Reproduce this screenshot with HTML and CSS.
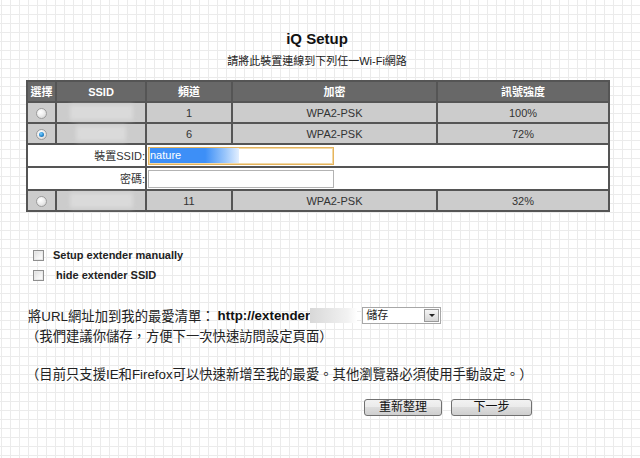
FILE: index.html
```html
<!DOCTYPE html>
<html lang="zh-Hant">
<head>
<meta charset="utf-8">
<title>iQ Setup</title>
<link rel="stylesheet" href="styles.css">
</head>
<body>
<div class="page">
  <h1 class="title">iQ Setup</h1>
  <p class="subtitle">請將此裝置連線到下列任一Wi-Fi網路</p>

  <table class="ap-table">
    <colgroup>
      <col class="c-sel"><col class="c-ssid"><col class="c-ch"><col class="c-enc"><col class="c-sig">
    </colgroup>
    <thead>
      <tr class="head-row">
        <th>選擇</th><th>SSID</th><th>頻道</th><th>加密</th><th>訊號強度</th>
      </tr>
    </thead>
    <tbody>
      <tr class="data-row">
        <td><span class="radio"></span></td>
        <td><span class="ssid-blur"></span></td>
        <td>1</td><td>WPA2-PSK</td><td>100%</td>
      </tr>
      <tr class="data-row">
        <td><span class="radio checked"></span></td>
        <td><span class="ssid-blur short"></span></td>
        <td>6</td><td>WPA2-PSK</td><td>72%</td>
      </tr>
      <tr class="form-row">
        <td colspan="2" class="form-label">裝置SSID:</td>
        <td colspan="3" class="form-field"><div class="text-field focused"><span class="sel-text">nature</span></div></td>
      </tr>
      <tr class="form-row">
        <td colspan="2" class="form-label">密碼:</td>
        <td colspan="3" class="form-field"><div class="text-field"></div></td>
      </tr>
      <tr class="data-row">
        <td><span class="radio"></span></td>
        <td><span class="ssid-blur"></span></td>
        <td>11</td><td>WPA2-PSK</td><td>32%</td>
      </tr>
    </tbody>
  </table>

  <div class="options">
    <div class="opt"><span class="checkbox"></span><span class="opt-text">Setup extender manually</span></div>
    <div class="opt"><span class="checkbox"></span><span class="opt-text indent">hide extender SSID</span></div>
  </div>

  <div class="url-line"><span>將URL網址加到我的最愛清單：</span><b class="url">http://extender</b><span class="url-blur"></span><span class="select"><span class="select-text">儲存</span><span class="select-btn"></span></span></div>
  <p class="note">（我們建議你儲存，方便下一次快速訪問設定頁面）</p>
  <p class="note note-2">（目前只支援IE和Firefox可以快速新增至我的最愛。其他瀏覽器必須使用手動設定。）</p>

  <div class="actions">
    <button class="btn btn-refresh" type="button">重新整理</button>
    <button class="btn btn-next" type="button">下一步</button>
  </div>
</div>
</body>
</html>
```

FILE: styles.css
```css
html, body {
  margin: 0;
  padding: 0;
}
body {
  width: 640px;
  height: 458px;
  overflow: hidden;
  background-color: #ffffff;
  background-image:
    linear-gradient(to right, #ebebeb 1px, transparent 1px),
    linear-gradient(to bottom, #ebebeb 1px, transparent 1px);
  background-size: 9px 9px;
  background-position: 1px 5px;
  font-family: "Liberation Sans", "Noto Sans CJK TC", sans-serif;
  color: #222;
  text-spacing-trim: space-all;
}
.page {
  margin-left: 26px;
  width: 582px;
  padding-top: 29px;
}
.title {
  margin: 0;
  font-size: 15px;
  line-height: 20px;
  font-weight: bold;
  text-align: center;
  color: #111;
}
.subtitle {
  margin: 5px 0 0;
  font-size: 11px;
  line-height: 14px;
  text-align: center;
  color: #222;
}

/* table */
.ap-table {
  margin-top: 12px;
  width: 582px;
  table-layout: fixed;
  border-collapse: collapse;
  border: 2px solid #555;
  font-size: 11px;
}
.c-sel { width: 29px; }
.c-ssid { width: 90px; }
.c-ch { width: 86px; }
.c-enc { width: 205px; }
.c-sig { width: 172px; }
.ap-table th,
.ap-table td {
  border: 2px solid #555;
  padding: 0;
  text-align: center;
  vertical-align: middle;
  line-height: 14px;
}
.head-row { height: 21px; }
.head-row th {
  background: #686868;
  color: #fff;
  font-weight: bold;
  font-size: 11px;
}
.data-row { height: 21px; }
.data-row td {
  background: #cccccc;
  color: #333;
}
.form-row { height: 23px; }
.form-row td {
  background: #fff;
}
.form-label {
  text-align: right !important;
  color: #333;
}
.form-field {
  text-align: left !important;
  padding-left: 1px !important;
}
.radio {
  display: inline-block;
  vertical-align: middle;
  width: 9px;
  height: 9px;
  border-radius: 50%;
  border: 1px solid #9a9a9a;
  background: radial-gradient(circle at 40% 35%, #ffffff 0, #f0f0f0 40%, #cfcfcf 100%);
  position: relative;
}
.radio.checked::after {
  content: "";
  position: absolute;
  left: 2px;
  top: 2px;
  width: 5px;
  height: 5px;
  border-radius: 50%;
  background: radial-gradient(circle at 40% 35%, #7fd0ff 0, #2a8fd6 50%, #14548a 100%);
}
.ssid-blur {
  display: inline-block;
  vertical-align: middle;
  width: 63px;
  height: 15px;
  background: #dadada;
  filter: blur(2px);
}
.ssid-blur.short {
  width: 50px;
}
.text-field {
  width: 184px;
  height: 16px;
  border: 1px solid #b3b3b3;
  background: #fff;
  display: flex;
  align-items: center;
}
.text-field.focused {
  border-color: #e6b45c;
  box-shadow: 0 0 0 1px #f3d9a6 inset;
}
.sel-text {
  display: block;
  margin-left: 1px;
  width: 89px;
  height: 15px;
  line-height: 15px;
  color: #fff;
  font-size: 11px;
  background: linear-gradient(to right, #3d8ff7 0, #3d8ff7 62%, #9cc7fb 85%, #e3efff 100%);
}

/* options */
.options {
  margin-top: 33px;
  padding-left: 7px;
}
.opt {
  height: 20px;
  display: flex;
  align-items: center;
  font-size: 11px;
  font-weight: bold;
  color: #222;
}
.checkbox {
  display: inline-block;
  width: 9px;
  height: 9px;
  border: 1px solid #8f8f8f;
  background: linear-gradient(135deg, #dcdcdc 0, #f4f4f4 60%, #ffffff 100%);
  box-shadow: inset 0 0 0 1px #e9e9e9;
}
.opt-text {
  margin-left: 9px;
}
.opt-text.indent {
  margin-left: 12px;
}

/* url line */
.url-line {
  margin-top: 19px;
  height: 22px;
  display: flex;
  align-items: center;
  font-size: 13.33px;
  padding-left: 2px;
  color: #222;
}
.url {
  margin-left: 3px;
  font-weight: bold;
  color: #111;
}
.url-blur {
  display: inline-block;
  width: 47px;
  height: 15px;
  background: linear-gradient(to right, #d8d8d8, #f2f2f2 80%, #fff);
}
.select {
  margin-left: 5px;
  width: 77px;
  height: 15px;
  border: 1px solid #a7a7a7;
  background: #fff;
  display: flex;
  align-items: center;
  justify-content: space-between;
}
.select-text {
  font-size: 11px;
  line-height: 14px;
  padding-left: 3px;
}
.select-btn {
  width: 13px;
  height: 11px;
  margin-right: 1px;
  border: 1px solid #9a9a9a;
  background: linear-gradient(#f4f4f4, #d6d6d6);
  position: relative;
}
.select-btn::after {
  content: "";
  position: absolute;
  left: 4px;
  top: 4px;
  border-left: 3px solid transparent;
  border-right: 3px solid transparent;
  border-top: 3px solid #222;
}
.note {
  margin: 0;
  height: 22px;
  line-height: 22px;
  font-size: 13.33px;
  color: #222;
}
.note-2 {
  margin-top: 16px;
}

/* buttons */
.actions {
  margin-top: 13px;
  display: flex;
  justify-content: flex-end;
  gap: 9px;
  padding-right: 76px;
}
.btn {
  height: 17px;
  padding: 0;
  border: 1px solid #707070;
  border-radius: 3px;
  background: linear-gradient(#f2f2f2 0, #ebebeb 45%, #dddddd 50%, #cfcfcf 100%);
  font-family: "Liberation Sans", "Noto Sans CJK TC", sans-serif;
  font-size: 12px;
  line-height: 15px;
  color: #111;
}
.btn-refresh { width: 78px; }
.btn-next { width: 81px; }
```
